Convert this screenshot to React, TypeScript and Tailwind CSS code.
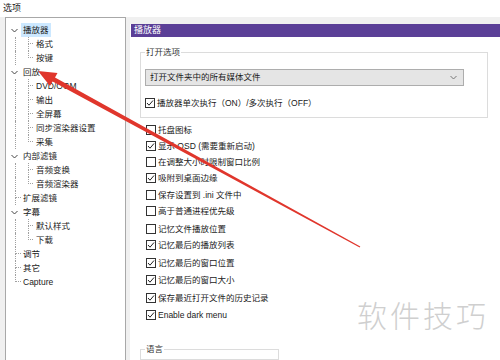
import React from "react";

const font = "font-['Liberation_Sans','Noto_Sans_CJK_SC',sans-serif]";

type TreeNode = { label: string; children?: string[]; selected?: boolean };

const tree: TreeNode[] = [
  { label: "播放器", children: ["格式", "按键"], selected: true },
  { label: "回放", children: ["DVD/OGM", "输出", "全屏幕", "同步渲染器设置", "采集"] },
  { label: "内部滤镜", children: ["音频变换", "音频渲染器"] },
  { label: "扩展滤镜" },
  { label: "字幕", children: ["默认样式", "下载"] },
  { label: "调节" },
  { label: "其它" },
  { label: "Capture" },
];

const options = [
  { label: "托盘图标", checked: false, mt: "mt-0" },
  { label: "显示 OSD (需要重新启动)", checked: true, mt: "mt-[4px]" },
  { label: "在调整大小时限制窗口比例", checked: false, mt: "mt-[4px]" },
  { label: "吸附到桌面边缘", checked: true, mt: "mt-[4px]" },
  { label: "保存设置到 .ini 文件中", checked: false, mt: "mt-[5px]" },
  { label: "高于普通进程优先级", checked: false, mt: "mt-[4px]" },
  { label: "记忆文件播放位置", checked: false, mt: "mt-[6px]" },
  { label: "记忆最后的播放列表", checked: true, mt: "mt-[4px]" },
  { label: "记忆最后的窗口位置", checked: true, mt: "mt-[6px]" },
  { label: "记忆最后的窗口大小", checked: true, mt: "mt-[5px]" },
  { label: "保存最近打开文件的历史记录", checked: true, mt: "mt-[6px]" },
  { label: "Enable dark menu", checked: true, mt: "mt-[5px]" },
];

function Chevron() {
  return (
    <svg width="7" height="5" viewBox="0 0 7 5" className="block">
      <polyline points="0.5,1 3.5,4 6.5,1" fill="none" stroke="#444" strokeWidth="1" />
    </svg>
  );
}

// dotted tree guide: vertical line + connector at the middle of the row
function Guide({ width, last }: { width: string; last?: boolean }) {
  return (
    <div className={`flex flex-col ${width}`}>
      <div className="h-[7px] border-l border-b border-dotted border-[#a0a0a0]" />
      <div className={`h-[7px] ${last ? "" : "border-l border-dotted border-[#a0a0a0]"}`} />
    </div>
  );
}

function Tree() {
  return (
    <div className="flex flex-col pt-[5px] pl-[0px]">
      {tree.map((n, i) => {
        const lastTop = i === tree.length - 1;
        return (
          <div key={n.label} className="flex flex-col">
            <div className="flex h-[14px] items-center">
              {n.children ? (
                <div className="w-[15px] flex justify-center pl-[1px]">
                  <Chevron />
                </div>
              ) : (
                <div className="flex w-[15px] h-full">
                  <div className="w-[9px]" />
                  <Guide width="w-[6px]" last={lastTop} />
                </div>
              )}
              <span
                className={`h-full flex items-center px-[2px] leading-none ${
                  n.selected ? "bg-[#cce8ff]" : ""
                }`}
              >
                {n.label}
              </span>
            </div>
            {n.children?.map((c, j) => (
              <div key={c} className="flex h-[14px] items-center">
                <div className="w-[9px]" />
                <div className="w-[7px] h-full border-l border-dotted border-[#a0a0a0]" />
                <div className="flex h-full">
                  <div className="w-[6px]" />
                  <Guide width="w-[5px]" last={j === n.children!.length - 1} />
                </div>
                <span className="ml-[3px] leading-none">{c}</span>
              </div>
            ))}
          </div>
        );
      })}
    </div>
  );
}

function Check({ checked }: { checked: boolean }) {
  return (
    <div className="w-[10px] h-[10px] border border-[#333] bg-white flex items-center justify-center shrink-0">
      {checked && (
        <svg width="8" height="8" viewBox="0 0 8 8">
          <polyline points="1,4 3,6.2 7,1.5" fill="none" stroke="#222" strokeWidth="1" />
        </svg>
      )}
    </div>
  );
}

function CheckRow({ label, checked, className = "" }: { label: string; checked: boolean; className?: string }) {
  return (
    <div className={`flex items-center h-[12px] gap-[2px] ${className}`}>
      <Check checked={checked} />
      <span className="leading-none whitespace-nowrap">{label}</span>
    </div>
  );
}

export default function App() {
  return (
    <div className={`relative w-[500px] h-[360px] overflow-hidden bg-[#f0f0f0] text-[8.5px] text-[#1a1a1a] ${font}`}>
      <div className="h-[17px] bg-white flex items-center pl-[3px] text-[9px]">选项</div>

      <div className="flex h-[343px]">
        <div className="ml-[5px] w-[121px] h-full bg-white border border-[#a8a8a8] border-b-0">
          <Tree />
        </div>

        <div className="ml-[4px] mt-[7px] flex-1 bg-white flex flex-col">
          <div className="ml-[1px] h-[13px] bg-[#5b3f97] text-white flex items-center pl-[3px] text-[9px]">
            播放器
          </div>

          <fieldset className="ml-[10px] w-[348px] mt-[9px] border border-[#dcdcdc] px-[4px] pb-[8px]">
            <legend className="px-[1px] leading-[12px] text-[#333]">打开选项</legend>
            <div className="mt-[11px] h-[17px] w-[319px] bg-[#e5e5e5] border border-[#adadad] flex items-center justify-between pl-[4px] pr-[6px]">
              <span className="leading-none">打开文件夹中的所有媒体文件</span>
              <svg width="7" height="5" viewBox="0 0 7 5">
                <polyline points="0.5,1 3.5,4 6.5,1" fill="none" stroke="#777" strokeWidth="1" />
              </svg>
            </div>
            <CheckRow className="mt-[11px]" label="播放器单次执行（ON）/多次执行（OFF）" checked />
          </fieldset>

          <div className="flex flex-col pl-[16px] mt-[6px]">
            {options.map((o) => (
              <CheckRow key={o.label} className={o.mt} label={o.label} checked={o.checked} />
            ))}
          </div>

          <fieldset className="ml-[10px] w-[139px] mt-[22px] border border-[#dcdcdc] px-[4px] h-[40px]">
            <legend className="px-[1px] leading-[12px] text-[#333]">语言</legend>
          </fieldset>
        </div>
      </div>

      {/* watermark */}
      <div className="absolute left-[357px] top-[299px] text-[30px] leading-[30px] tracking-[3px] text-[#cfcfcf] font-['Noto_Sans_CJK_SC',sans-serif] font-light pointer-events-none">
        软件技巧
      </div>

      {/* red annotation arrow */}
      <svg className="absolute inset-0 pointer-events-none" width="500" height="360" viewBox="0 0 500 360">
        <polygon
          points="38,71 57.5,73 55,77.6 360.3,246.5 359.7,247.5 52.6,81.6 50,86"
          fill="#e0362c"
        />
      </svg>
    </div>
  );
}
